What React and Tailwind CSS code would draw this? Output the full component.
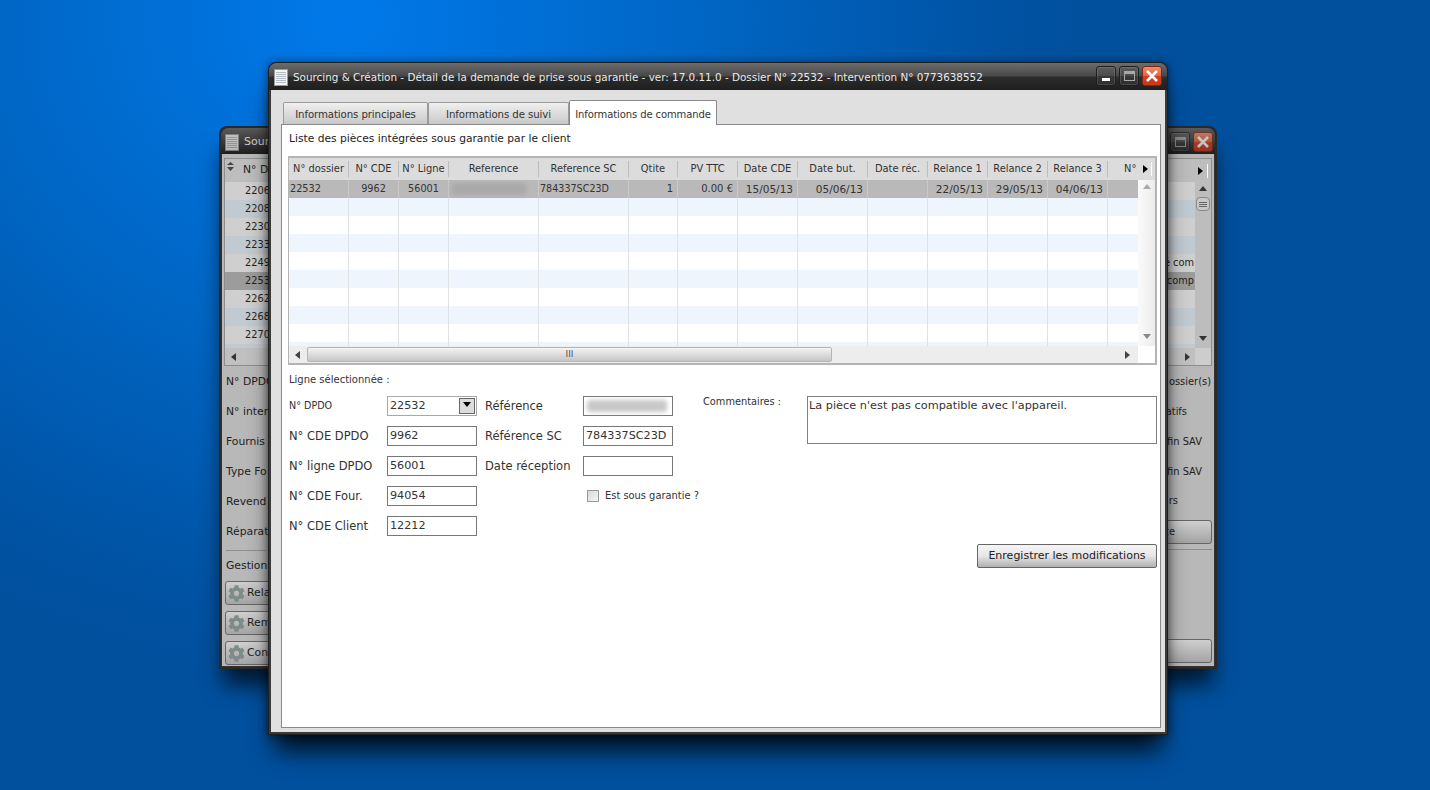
import React from 'react';
import { FaCog } from 'react-icons/fa';

const FONT = "font-['DejaVu_Sans',Verdana,sans-serif]";

const COLUMNS = [
  { label: 'N° dossier', width: 60, value: '22532', align: 'text-left pl-px text-[9.7px]' },
  { label: 'N° CDE', width: 50, value: '9962', align: 'text-center text-[9.7px]' },
  { label: 'N° Ligne', width: 50, value: '56001', align: 'text-center text-[9.7px]' },
  { label: 'Reference', width: 90, value: '', blur: true, align: 'text-left pl-px' },
  { label: 'Reference SC', width: 90, value: '784337SC23D', align: 'text-left pl-px text-[9.6px]' },
  { label: 'Qtite', width: 49, value: '1', align: 'text-right pr-1 text-[10px]' },
  { label: 'PV TTC', width: 60, value: '0.00 €', align: 'text-right pr-1 text-[10px]' },
  { label: 'Date CDE', width: 60, value: '15/05/13', align: 'text-right pr-1 text-[10.5px]' },
  { label: 'Date but.', width: 70, value: '05/06/13', align: 'text-right pr-1 text-[10.5px]' },
  { label: 'Date réc.', width: 60, value: '', align: 'text-right pr-1' },
  { label: 'Relance 1', width: 60, value: '22/05/13', align: 'text-right pr-1 text-[10.5px]' },
  { label: 'Relance 2', width: 60, value: '29/05/13', align: 'text-right pr-1 text-[10.5px]' },
  { label: 'Relance 3', width: 60, value: '04/06/13', align: 'text-right pr-1 text-[10.5px]' },
];

const BACK_ROWS = ['2206', '2208', '2230', '2233', '2249', '2253', '2262', '2268', '2270'];

function Tri({ dir = 'up', className = 'fill-[#777]' }) {
  const points = {
    up: '0,5 8,5 4,0',
    down: '0,0 8,0 4,5',
    left: '5,0 5,8 0,4',
    right: '0,0 0,8 5,4',
  }[dir];
  return (
    <svg width="8" height="8" viewBox="0 0 8 8" className={className}>
      <polygon points={points} />
    </svg>
  );
}

function DocIcon({ dim }) {
  return (
    <svg width="14" height="17" viewBox="0 0 14 17" className={dim ? 'opacity-70' : ''}>
      <rect x="0.5" y="0.5" width="13" height="16" fill="#f4f4f4" stroke="#9a9a9a" />
      {[3, 5, 7, 9, 11, 13].map((y) => (
        <line key={y} x1="2" x2="12" y1={y + 0.5} y2={y + 0.5} stroke="#b4bcc6" />
      ))}
    </svg>
  );
}

function WinButtons() {
  const dark = 'rounded-[3px] border border-[#1e1e1e] bg-[linear-gradient(#5c5c5c_0%,#4c4c4c_48%,#383838_52%,#2e2e2e_100%)] shadow-[inset_0_0_0_1px_rgba(255,255,255,0.12)]';
  return (
    <div className="flex gap-[3px]">
      <div className={`flex h-[20px] w-[20px] items-end justify-center pb-[4px] ${dark}`}>
        <div className="h-[3px] w-[8px] bg-white" />
      </div>
      <div className={`flex h-[20px] w-[20px] items-center justify-center ${dark}`}>
        <div className="h-[10px] w-[11px] border border-t-[3px] border-[#a8a8a8]" />
      </div>
      <div className="flex h-[20px] w-[20px] items-center justify-center rounded-[3px] border border-[#7a2a1a] bg-[linear-gradient(#ee8c6c_0%,#e2633f_48%,#d63e1e_52%,#c8391c_100%)]">
        <svg width="12" height="12" viewBox="0 0 12 12">
          <path d="M1 1 L11 11 M11 1 L1 11" stroke="white" strokeWidth="2.6" />
        </svg>
      </div>
    </div>
  );
}

function Field({ label, value, blur }) {
  return (
    <div className="flex h-[20px] items-center">
      <span className="w-[98px] shrink-0 whitespace-nowrap pt-px text-[11.5px] text-[#333]">{label}</span>
      <div className="flex h-[20px] w-[90px] shrink-0 items-center whitespace-nowrap border border-[#777] bg-white pl-[2px] text-[11.2px] text-[#333]">
        {blur ? <div className="ml-[1px] h-[12px] w-[80px] rounded-sm bg-[#c8c8c8] blur-[2px]" /> : value}
      </div>
    </div>
  );
}

function BackWindow() {
  const backBtn = 'rounded-[3px] border border-[#666] bg-gradient-to-b from-[#cfcfcf] to-[#a4a4a4]';
  return (
    <section className="absolute left-[219px] top-[126px] flex h-[543px] w-[998px] flex-col rounded-t-lg border-2 border-[#2a2a2a] bg-[#333] shadow-[0_20px_22px_-4px_rgba(0,0,0,0.7)]">
      <header className="flex h-[26px] shrink-0 items-center justify-between rounded-t-lg bg-gradient-to-b from-[#5a5a5a] via-[#3c3c3c] to-[#1e1e1e] pl-[4px] pr-[2px] pt-[2px]">
        <div className="flex items-center gap-[5px] text-[11px] text-[#d0d0d0]">
          <DocIcon dim />
          <span>Sour</span>
        </div>
        <div className="opacity-70">
          <WinButtons />
        </div>
      </header>
      <div className="mx-px mb-px flex flex-1 flex-col bg-[#b8b8b8] px-[2px] pt-[4px] text-[10.8px] text-[#222]">
        <div className="flex h-[208px] shrink-0 flex-col border border-[#8d8d8d] bg-[#c9c9c9]">
          <div className="relative flex h-[23px] items-center justify-between bg-[#bdbdbd] pl-[18px] pr-[3px]">
            <span>N° D</span>
            <div className="flex items-center gap-[1px]">
              <Tri dir="right" className="fill-black" />
              <div className="h-[14px] w-px bg-white" />
            </div>
            <div className="absolute left-[2px] top-[3px] flex flex-col gap-px">
              <svg width="7" height="9" viewBox="0 0 7 9" className="fill-[#444]">
                <polygon points="0,3 7,3 3.5,0" />
                <polygon points="0,5 7,5 3.5,9" />
              </svg>
            </div>
          </div>
          <div className="flex flex-1 overflow-hidden">
            <div className="flex-1 overflow-hidden text-[9.8px]">
              {BACK_ROWS.map((row, i) => (
                <div
                  key={row}
                  className={`flex h-[18px] items-center justify-between px-[20px] pr-[1px] ${
                    row === '2253' ? 'bg-[#9c9c9c]' : i % 2 ? 'bg-[#c2cad1]' : 'bg-[#cfcfcf]'
                  }`}
                >
                  <span>{row}</span>
                  {row === '2249' && <span>é com</span>}
                  {row === '2253' && <span>comp</span>}
                </div>
              ))}
              <div className="h-[4px] bg-[#c2cad1]" />
            </div>
            <div className="flex w-[16px] flex-col items-center justify-between bg-[#bdbdbd] py-[4px]">
              <div className="flex flex-col items-center gap-[3px]">
                <Tri dir="up" className="fill-[#333]" />
                <div className="flex h-[14px] w-[14px] flex-col items-center justify-center gap-px rounded-sm border border-[#888] bg-[#c8c8c8]">
                  <div className="h-px w-[8px] bg-[#666]" />
                  <div className="h-px w-[8px] bg-[#666]" />
                  <div className="h-px w-[8px] bg-[#666]" />
                </div>
              </div>
              <Tri dir="down" className="fill-[#333]" />
            </div>
          </div>
          <div className="flex h-[17px] items-center">
            <div className="flex h-full flex-1 items-center justify-between bg-[#c0c0c0] px-[6px] pr-[2px]">
              <Tri dir="left" className="fill-[#333]" />
              <Tri dir="right" className="fill-[#333]" />
            </div>
            <div className="h-full w-[16px] bg-[#cdcdcd]" />
          </div>
        </div>

        <div className="mt-px flex flex-1 justify-between">
          <div className="flex w-[60px] flex-col pl-[2px]">
            {['N° DPDO', 'N° inter', 'Fournis', 'Type Fo', 'Revend', 'Réparat'].map((t) => (
              <div key={t} className="flex h-[30px] items-center whitespace-nowrap">{t}</div>
            ))}
            <div className="mt-[3px] h-px w-[40px] bg-[#8f8f8f]" />
            <div className="mt-[7px] flex h-[16px] items-center whitespace-nowrap">Gestion</div>
            <div className="-ml-px mt-[7px] flex flex-col gap-[6px]">
              {['Rela', 'Rem', 'Con'].map((t) => (
                <div key={t} className={`flex h-[24px] w-[120px] items-center gap-[2px] pl-[2px] ${backBtn}`}>
                  <FaCog className="h-[17px] w-[17px] text-[#7f8b88]" />
                  <span>{t}</span>
                </div>
              ))}
            </div>
          </div>
          <div className="flex w-[120px] flex-col items-end text-[9.9px]">
            <div className="flex h-[30px] items-center pr-[1px]">ossier(s)</div>
            <div className="flex h-[30px] items-center pr-[25px]">atifs</div>
            <div className="flex h-[30px] items-center pr-[10px]">fin SAV</div>
            <div className="flex h-[30px] items-center pr-[10px]">fin SAV</div>
            <div className="flex h-[28px] items-center pr-[34px]">rs</div>
            <div className={`mt-[5px] flex h-[24px] w-[120px] items-center justify-end pr-[36px] ${backBtn}`}>te</div>
            <div className="mt-[5px] h-px w-[44px] bg-[#8f8f8f]" />
            <div className="flex-1" />
            <div className={`mb-[3px] h-[24px] w-[120px] ${backBtn}`} />
          </div>
        </div>
      </div>
    </section>
  );
}

function PartsTable() {
  return (
    <div className="mt-[10px] flex h-[209px] shrink-0 flex-col border-2 border-l-[1px] border-[#b4b4b4] bg-white text-[9.9px] text-[#333]">
      {/* Header */}
      <div className="flex h-[22px] shrink-0 items-center bg-[#dcdcdc]">
        {COLUMNS.map((col) => (
          <div
            key={col.label}
            style={{ width: col.width }}
            className="h-[16px] shrink-0 whitespace-nowrap border-r border-[#bcbcbc] text-center leading-[16px]"
          >
            {col.label}
          </div>
        ))}
        <div className="flex flex-1 items-center justify-between pl-[16px]">
          <span>N°</span>
          <div className="flex items-center pr-[3px]">
            <Tri dir="right" className="fill-black" />
            <div className="h-[14px] w-px bg-white" />
          </div>
        </div>
      </div>

      <div className="flex min-h-0 flex-1">
        <div className="relative flex-1 overflow-hidden">
          {/* Selected row */}
          <div className="flex h-[18px] items-center bg-[#b9b9b9]">
            {COLUMNS.map((col) => (
              <div
                key={col.label}
                style={{ width: col.width }}
                className={`h-full shrink-0 whitespace-nowrap border-r border-[#c8c8c8] leading-[18px] ${col.align}`}
              >
                {col.blur ? <div className="ml-[2px] mt-[3px] h-[12px] w-[74px] bg-[#a9a9a9] blur-[2px]" /> : col.value}
              </div>
            ))}
            <div className="h-full w-[33px] shrink-0" />
          </div>
          {/* Empty rows */}
          {Array.from({ length: 9 }).map((_, i) => (
            <div key={i} className={`flex h-[18px] ${i % 2 === 0 ? 'bg-[#eef5fc]' : 'bg-white'}`}>
              {COLUMNS.map((col) => (
                <div key={col.label} style={{ width: col.width }} className="h-full shrink-0 border-r border-[#dfe2e5]" />
              ))}
            </div>
          ))}
        </div>
        <div className="flex w-[17px] shrink-0 flex-col items-center justify-between bg-gradient-to-r from-[#fafafa] to-[#ececec] py-[4px]">
          <Tri dir="up" className="fill-[#aaa]" />
          <Tri dir="down" className="fill-[#888]" />
        </div>
      </div>

      {/* Horizontal scrollbar */}
      <div className="flex h-[17px] shrink-0">
        <div className="flex flex-1 items-center bg-[#ededed]">
          <div className="flex w-[18px] justify-center pl-[2px]">
            <Tri dir="left" className="fill-[#444]" />
          </div>
          <div className="flex h-[15px] w-[525px] items-center justify-center rounded-[2px] border border-[#b5b5b5] bg-gradient-to-b from-[#f4f4f4] to-[#c6c6c6] text-[9px] leading-none text-[#555]">
            III
          </div>
          <div className="flex-1" />
          <div className="flex w-[18px] justify-center">
            <Tri dir="right" className="fill-[#444]" />
          </div>
        </div>
        <div className="w-[17px] bg-white" />
      </div>
    </div>
  );
}

function FrontWindow() {
  return (
    <section className="absolute left-[268px] top-[62px] flex h-[673px] w-[900px] flex-col rounded-t-lg border border-[#1f1f1f] bg-[#3a3a3a] shadow-[0_22px_24px_-6px_rgba(0,0,0,0.8),0_0_8px_rgba(0,0,0,0.5)]">
      <header className="flex h-[27px] shrink-0 justify-between rounded-t-lg bg-[linear-gradient(#6c6c6c_0%,#4a4a4a_46%,#2c2c2c_54%,#1e1e1e_100%)] pl-[5px] pr-[5px]">
        <div className="flex items-center gap-[5px] pt-[2px] text-[10.4px] text-[#eaeaea]">
          <DocIcon />
          <span className="whitespace-nowrap">
            Sourcing &amp; Création - Détail de la demande de prise sous garantie - ver: 17.0.11.0 - Dossier N° 22532 - Intervention N° 0773638552
          </span>
        </div>
        <div className="pt-[3px]">
          <WinButtons />
        </div>
      </header>

      <div className="mx-[2px] mb-[2px] flex min-h-0 flex-1 flex-col bg-[#e0e0e0] pb-[4px] pl-[10px] pr-[4px] pt-[10px]">
        {/* Tabs */}
        <div className="z-10 flex h-[24px] shrink-0 items-end pl-[2px] text-[10.2px] tracking-[-0.1px] text-[#333]">
          <div className="flex h-[22px] w-[145px] items-center justify-center rounded-t-[2px] border border-b-0 border-[#9a9a9a] bg-gradient-to-b from-[#f0f0f0] to-[#c8c8c8] pt-[3px]">
            Informations principales
          </div>
          <div className="flex h-[22px] w-[141px] items-center justify-center rounded-t-[2px] border border-b-0 border-[#9a9a9a] bg-gradient-to-b from-[#f0f0f0] to-[#c8c8c8] pt-[3px]">
            Informations de suivi
          </div>
          <div className="-mb-px flex h-[25px] w-[148px] items-center justify-center rounded-t-[2px] border border-b-0 border-[#8a8a8a] bg-white pt-[3px] text-[10px]">
            Informations de commande
          </div>
        </div>

        {/* Panel */}
        <div className="flex min-h-0 flex-1 flex-col border border-[#8a8a8a] bg-white pl-[6px] pr-[3px] pt-[7px]">
          <div className="pl-[1px] text-[10.7px] leading-[14px] text-[#222]">Liste des pièces intégrées sous garantie par le client</div>
          <PartsTable />

          <div className="mt-[8px] pl-[1px] text-[10px] leading-[14px] text-[#333]">Ligne sélectionnée :</div>

          <div className="mt-[9px] flex pl-[1px]">
            <div className="flex w-[196px] shrink-0 flex-col gap-[10px]">
              <div className="flex h-[20px] items-center">
                <span className="w-[98px] shrink-0 pt-px text-[9.6px] text-[#333]">N° DPDO</span>
                <div className="flex h-[20px] w-[90px] shrink-0 items-center justify-between border border-[#a8a8a8] bg-white pl-[2px] pr-px text-[11.2px] text-[#333]">
                  22532
                  <div className="flex h-[16px] w-[16px] items-center justify-center border border-[#666] bg-[#dcdcdc]">
                    <Tri dir="down" className="fill-black" />
                  </div>
                </div>
              </div>
              <Field label="N° CDE DPDO" value="9962" />
              <Field label="N° ligne DPDO" value="56001" />
              <Field label="N° CDE Four." value="94054" />
              <Field label="N° CDE Client" value="12212" />
            </div>
            <div className="flex w-[218px] shrink-0 flex-col gap-[10px]">
              <Field label="Référence" blur />
              <Field label="Référence SC" value="784337SC23D" />
              <Field label="Date réception" value="" />
              <div className="flex h-[20px] items-center pl-[102px] text-[9.9px] text-[#333]">
                <div className="h-[12px] w-[12px] shrink-0 border border-[#9a9a9a] bg-gradient-to-br from-[#d8d8d8] to-[#f6f6f6]" />
                <span className="ml-[6px] whitespace-nowrap">Est sous garantie ?</span>
              </div>
            </div>
            <div className="flex">
              <span className="w-[104px] shrink-0 text-[9.8px] leading-[12px] text-[#333]">Commentaires :</span>
              <div className="h-[48px] w-[350px] shrink-0 border border-[#808080] bg-white px-[1px] pt-[1px] text-[11.3px] leading-[16px] text-[#333]">
                La pièce n'est pas compatible avec l'appareil.
              </div>
            </div>
          </div>

          <div className="mt-[8px] flex justify-end">
            <button className="h-[24px] w-[180px] rounded-[2px] border border-[#666] bg-gradient-to-b from-[#f6f6f6] via-[#e6e6e6] to-[#b0b0b0] text-[11px] text-[#222]">
              Enregistrer les modifications
            </button>
          </div>
        </div>
      </div>
    </section>
  );
}

export default function App() {
  return (
    <div className={`relative h-[790px] w-[1430px] overflow-hidden ${FONT} bg-[radial-gradient(ellipse_740px_660px_at_345px_20px,#0079ea_0%,#0067c6_46%,#0052a2_90%,#00509e_100%)]`}>
      <BackWindow />
      <FrontWindow />
    </div>
  );
}
